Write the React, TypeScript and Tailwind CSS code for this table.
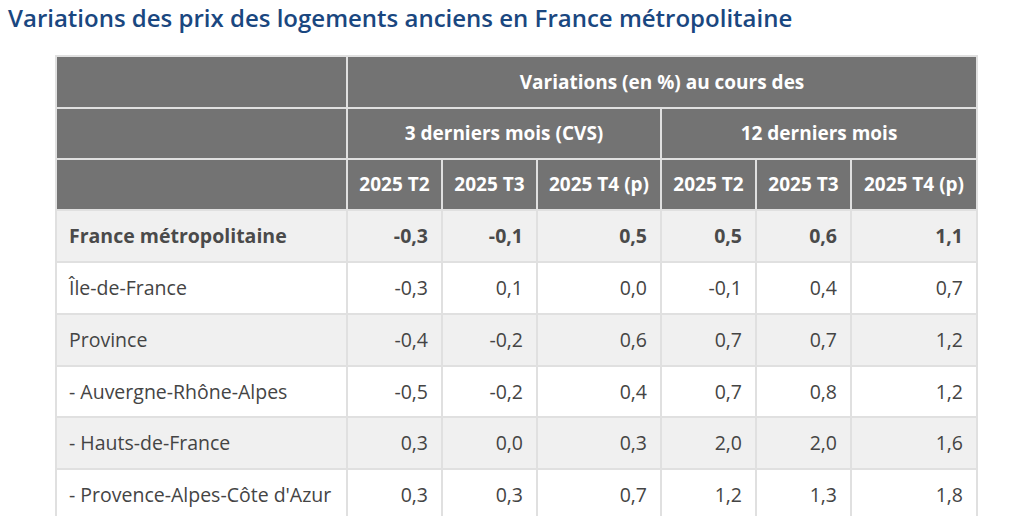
import React from "react";

const rows = [
  { label: "France métropolitaine", values: ["-0,3", "-0,1", "0,5", "0,5", "0,6", "1,1"], bold: true },
  { label: "Île-de-France", values: ["-0,3", "0,1", "0,0", "-0,1", "0,4", "0,7"] },
  { label: "Province", values: ["-0,4", "-0,2", "0,6", "0,7", "0,7", "1,2"] },
  { label: "- Auvergne-Rhône-Alpes", values: ["-0,5", "-0,2", "0,4", "0,7", "0,8", "1,2"] },
  { label: "- Hauts-de-France", values: ["0,3", "0,0", "0,3", "2,0", "2,0", "1,6"] },
  { label: "- Provence-Alpes-Côte d'Azur", values: ["0,3", "0,3", "0,7", "1,2", "1,3", "1,8"] },
];

const periods = ["2025 T2", "2025 T3", "2025 T4 (p)", "2025 T2", "2025 T3", "2025 T4 (p)"];

const App = () => {
  return (
    <div className="w-[1030px] h-[516px] overflow-hidden bg-white font-['Open_Sans',sans-serif]">
      {/* Title */}
      <h2 className="pl-2 pt-[2px] text-[24px] leading-[32px] font-semibold text-[#1a4780]">
        Variations des prix des logements anciens en France métropolitaine
      </h2>

      {/* Table */}
      <div className="pl-[55px] pt-[21px]">
        <table className="table-fixed border-separate border-spacing-0 border-t-2 border-l-2 border-[#e0e0e0] w-[923px]">
          <colgroup>
            <col className="w-[291px]" />
            <col className="w-[95px]" />
            <col className="w-[95px]" />
            <col className="w-[124px]" />
            <col className="w-[95px]" />
            <col className="w-[95px]" />
            <col className="w-[126px]" />
          </colgroup>
          <thead className="text-white text-[19px] font-semibold">
            <tr className="h-[52px]">
              <th className="bg-[#737373] border-r-2 border-b-2 border-[#e0e0e0]"></th>
              <th colSpan={6} className="bg-[#737373] border-r-2 border-b-2 border-[#e0e0e0] text-center">
                Variations (en %) au cours des
              </th>
            </tr>
            <tr className="h-[51px]">
              <th className="bg-[#737373] border-r-2 border-b-2 border-[#e0e0e0]"></th>
              <th colSpan={3} className="bg-[#737373] border-r-2 border-b-2 border-[#e0e0e0] text-center">
                3 derniers mois (CVS)
              </th>
              <th colSpan={3} className="bg-[#737373] border-r-2 border-b-2 border-[#e0e0e0] text-center">
                12 derniers mois
              </th>
            </tr>
            <tr className="h-[51px]">
              <th className="bg-[#737373] border-r-2 border-b-2 border-[#e0e0e0]"></th>
              {periods.map((p, i) => (
                <th key={i} className="bg-[#737373] border-r-2 border-b-2 border-[#e0e0e0] text-center whitespace-nowrap">
                  {p}
                </th>
              ))}
            </tr>
          </thead>
          <tbody className="text-[19.5px] text-[#444]">
            {rows.map((r, i) => (
              <tr key={r.label} className={i === 3 ? "h-[51px]" : "h-[52px]"}>
                <td
                  className={`border-r-2 border-b-2 border-[#e0e0e0] pl-3 whitespace-nowrap ${
                    i % 2 === 0 ? "bg-[#f0f0f0]" : "bg-white"
                  } ${r.bold ? "font-bold text-[#4a4a4a]" : ""}`}
                >
                  {r.label}
                </td>
                {r.values.map((v, j) => (
                  <td
                    key={j}
                    className={`border-r-2 border-b-2 border-[#e0e0e0] pr-[13px] text-right ${
                      i % 2 === 0 ? "bg-[#f0f0f0]" : "bg-white"
                    } ${r.bold ? "font-bold text-[#4a4a4a]" : ""}`}
                  >
                    {v}
                  </td>
                ))}
              </tr>
            ))}
          </tbody>
        </table>
      </div>
    </div>
  );
};

export default App;
